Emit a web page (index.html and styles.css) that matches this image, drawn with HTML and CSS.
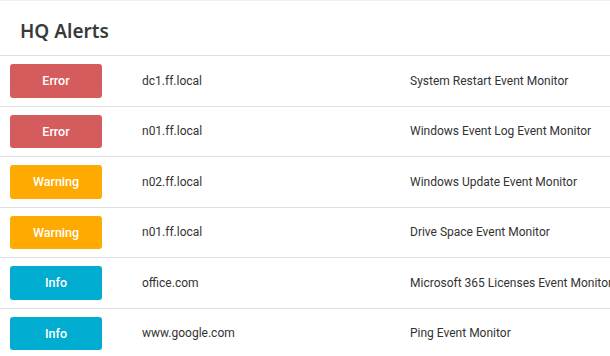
FILE: index.html
```html
<!DOCTYPE html>
<html lang="en">
<head>
    <meta charset="UTF-8">
    <title>HQ Alerts</title>
    <link rel="stylesheet" href="styles.css">
</head>
<body>
    <div class="panel">
        <h2 class="panel-title">HQ Alerts</h2>
        <table class="alerts">
            <tr>
                <td class="sev"><span class="badge error">Error</span></td>
                <td class="host">dc1.ff.local</td>
                <td class="monitor">System Restart Event Monitor</td>
            </tr>
            <tr>
                <td class="sev"><span class="badge error">Error</span></td>
                <td class="host">n01.ff.local</td>
                <td class="monitor">Windows Event Log Event Monitor</td>
            </tr>
            <tr>
                <td class="sev"><span class="badge warning">Warning</span></td>
                <td class="host">n02.ff.local</td>
                <td class="monitor">Windows Update Event Monitor</td>
            </tr>
            <tr>
                <td class="sev"><span class="badge warning">Warning</span></td>
                <td class="host">n01.ff.local</td>
                <td class="monitor">Drive Space Event Monitor</td>
            </tr>
            <tr>
                <td class="sev"><span class="badge info">Info</span></td>
                <td class="host">office.com</td>
                <td class="monitor">Microsoft 365 Licenses Event Monitor</td>
            </tr>
            <tr>
                <td class="sev"><span class="badge info">Info</span></td>
                <td class="host">www.google.com</td>
                <td class="monitor">Ping Event Monitor</td>
            </tr>
        </table>
    </div>
</body>
</html>
```

FILE: styles.css
```css
body {
    margin: 0;
    padding: 0;
    background: #fff;
    font-family: Roboto, "Noto Sans", sans-serif;
    color: #333;
    overflow: hidden;
}
.panel {
    border-top: 1px solid #eee;
    width: 640px;
}
.panel-title {
    margin: 0;
    padding: 17px 20px 0;
    height: 37px;
    font-family: "Noto Sans", sans-serif;
    font-size: 19px;
    font-weight: 600;
    color: #3a3a3a;
    border-bottom: 1px solid #e0e0e0;
    box-sizing: content-box;
}
.alerts {
    border-collapse: collapse;
    width: 100%;
}
.alerts td {
    padding: 8px 0;
    border-bottom: 1px solid #e0e0e0;
    font-size: 12px;
    white-space: nowrap;
    vertical-align: middle;
}
.alerts td.sev {
    width: 92px;
    padding-left: 10px;
    padding-right: 40px;
}
.alerts td.host {
    width: 268px;
}
.badge {
    display: flex;
    align-items: center;
    justify-content: center;
    width: 92px;
    height: 33.5px;
    border-radius: 3px;
    color: #fff;
    font-weight: 500;
    font-size: 12.5px;
}
.error {
    background: #d55c5c;
}
.warning {
    background: #ffaa00;
}
.info {
    background: #00acd0;
}
```
